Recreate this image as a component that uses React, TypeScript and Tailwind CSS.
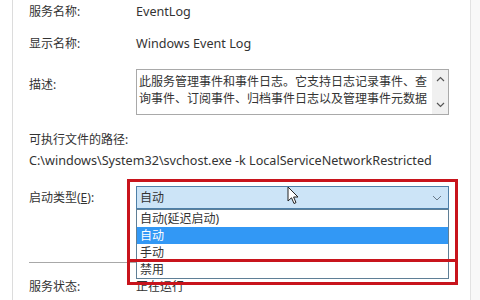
import React from 'react';

const font = { fontFamily: '"Noto Sans", "Noto Sans CJK SC", sans-serif' };

const Row: React.FC<{ label: string; className?: string; children?: React.ReactNode }> = ({ label, className, children }) => (
  <div className={`flex items-center h-4 ${className ?? ''}`}>
    <div className="w-[107px] shrink-0">{label}</div>
    {children}
  </div>
);

const Cursor = () => (
  <svg width="12" height="19" viewBox="0 0 12 19" className="absolute left-[287px] top-[186px]">
    <path d="M1 1 L1 15 L4.5 11.8 L7 17.5 L9 16.6 L6.6 11 L11 11 Z" fill="#fff" stroke="#222" strokeWidth="1" strokeLinejoin="round" />
  </svg>
);

export default function App() {
  return (
    <div style={font} className="relative w-[480px] h-[300px] overflow-hidden bg-white text-[12px] text-[#333] flex">
      <div className="w-[13px] shrink-0 bg-white border-r border-[#dcdcdc]" />
      <div className="w-[457px] pl-[16px] pt-[4px]">
        <Row label="服务名称:"><span className="text-[12.6px]">EventLog</span></Row>
        <Row label="显示名称:" className="mt-[16px]"><span className="text-[12.6px]">Windows Event Log</span></Row>

        <div className="flex items-start mt-[17px]">
          <div className="w-[107px] shrink-0 pt-[8px] leading-4">描述:</div>
          <div className="w-[313px] h-[46px] border border-[#a9a9a9] flex">
            <div className="flex-1 pl-[2px] pt-[3px] leading-[17px] whitespace-nowrap">
              此服务管理事件和事件日志。它支持日志记录事件、查
              <br />
              询事件、订阅事件、归档事件日志以及管理事件元数据
            </div>
            <div className="w-[16px] bg-[#f0f0f0] flex flex-col justify-between items-center py-[6px]">
              <svg width="9" height="6" viewBox="0 0 9 6"><path d="M1 5 L4.5 1.5 L8 5" fill="none" stroke="#555" strokeWidth="1.2" /></svg>
              <svg width="9" height="6" viewBox="0 0 9 6"><path d="M1 1 L4.5 4.5 L8 1" fill="none" stroke="#555" strokeWidth="1.2" /></svg>
            </div>
          </div>
        </div>

        <div className="mt-[17px] h-4 leading-4">可执行文件的路径:</div>
        <div className="mt-[5px] h-4 leading-4 whitespace-nowrap text-[12.6px]">C:\windows\System32\svchost.exe -k LocalServiceNetworkRestricted</div>

        <div className="flex items-center mt-[17px] h-[23px]">
          <div className="w-[107px] shrink-0">启动类型(<span className="underline">E</span>):</div>
          <div className="w-[313px] h-[23px] border border-[#4d7fa8] bg-[#cce4f7] flex items-center justify-between pl-[3px] pr-[6px]">
            <span>自动</span>
            <svg width="10" height="6" viewBox="0 0 10 6"><path d="M1 1 L5 5 L9 1" fill="none" stroke="#6a7a88" strokeWidth="1" /></svg>
          </div>
        </div>

        <div className="mt-[53px] h-px w-[420px] bg-[#a8a8a8]" />
        <Row label="服务状态:" className="mt-[16px]">正在运行</Row>
      </div>
      <div className="flex-1 border-l border-[#e2e2e2] bg-[#f8f8f8]" />

      {/* dropdown list */}
      <div className="absolute left-[136px] top-[209px] w-[313px] border border-[#5f7f96] bg-white">
        <div className="h-[17px] leading-[17px] pl-[3px]">自动(延迟启动)</div>
        <div className="h-[17px] leading-[17px] pl-[3px] bg-[#3298f5] text-white">自动</div>
        <div className="h-[17px] leading-[17px] pl-[3px]">手动</div>
        <div className="h-[17px] leading-[17px] pl-[3px]">禁用</div>
      </div>

      {/* red annotation boxes */}
      <div className="absolute left-[127px] top-[179px] w-[331px] h-[83px] border-[3px] border-[#c8141c]" />
      <div className="absolute left-[127px] top-[259px] w-[331px] h-[26px] border-[3px] border-[#c8141c]" />

      <Cursor />
    </div>
  );
}
